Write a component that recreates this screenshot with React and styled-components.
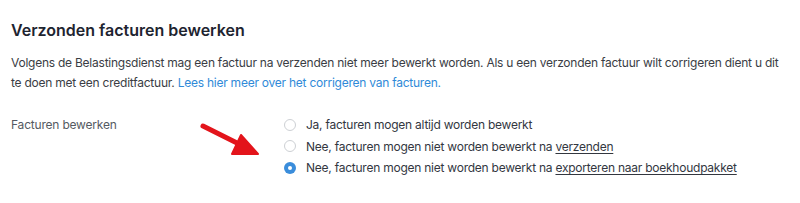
import React from "react";
import styled, { createGlobalStyle } from "styled-components";

const Global = createGlobalStyle`
  html, body { margin: 0; padding: 0; background: #fff; }
  body { font-family: Inter, "Noto Sans", sans-serif; -webkit-font-smoothing: antialiased; }
`;

const Page = styled.div`
  padding: 19px 14px 0 11px;
  width: 800px;
  box-sizing: border-box;
`;

const Title = styled.h2`
  margin: 0;
  font-size: 16px;
  line-height: 22px;
  font-weight: 600;
  color: #1e2430;
`;

const Intro = styled.p`
  margin: 12px 0 0 0;
  font-size: 12px;
  letter-spacing: -0.24px;
  line-height: 20px;
  color: #3a3d44;
`;

const Link = styled.a`
  color: #2f8ad8;
  text-decoration: none;
`;

const FieldRow = styled.div`
  display: grid;
  grid-template-columns: 273px 1fr;
  margin-top: 21px;
`;

const Label = styled.div`
  font-size: 12px;
  letter-spacing: -0.2px;
  line-height: 21px;
  color: #555a62;
`;

const Options = styled.div`
  position: relative;
  display: flex;
  flex-direction: column;
`;

const Option = styled.label`
  display: flex;
  align-items: center;
  gap: 10px;
  font-size: 12px;
  letter-spacing: -0.24px;
  line-height: 21.5px;
  color: #33373f;
`;

const Radio = styled.span`
  width: 12px;
  height: 12px;
  border-radius: 50%;
  box-sizing: border-box;
  flex: none;
  border: ${(p) => (p.$checked ? "none" : "1px solid #cdd0d4")};
  background: ${(p) => (p.$checked ? "#3a8ddb" : "#fff")};
  display: flex;
  align-items: center;
  justify-content: center;
  &::after {
    content: "";
    display: ${(p) => (p.$checked ? "block" : "none")};
    width: 4px;
    height: 4px;
    border-radius: 50%;
    background: #fff;
  }
`;

const Underlined = styled.span`
  text-decoration: underline;
  text-underline-offset: 2px;
  text-decoration-thickness: 1px;
`;

const Arrow = styled.svg`
  position: absolute;
  left: -90px;
  top: 7px;
  width: 70px;
  height: 52px;
  overflow: visible;
`;

export default function App() {
  return (
    <Page>
      <Global />
      <Title>Verzonden facturen bewerken</Title>
      <Intro>
        Volgens de Belastingsdienst mag een factuur na verzenden niet meer bewerkt worden. Als u een verzonden factuur wilt corrigeren dient u dit te doen met een creditfactuur.{" "}
        <Link href="#">Lees hier meer over het corrigeren van facturen.</Link>
      </Intro>
      <FieldRow>
        <Label>Facturen bewerken</Label>
        <Options>
          <Arrow viewBox="0 0 70 52">
            <path d="M9 5 L49 25" stroke="#e3141b" strokeWidth="5" strokeLinecap="round" fill="none" />
            <path d="M47 14 L64 33 L38 33 Z" fill="#e3141b" stroke="#e3141b" strokeWidth="2" strokeLinejoin="round" />
          </Arrow>
          <Option>
            <Radio />
            <span>Ja, facturen mogen altijd worden bewerkt</span>
          </Option>
          <Option>
            <Radio />
            <span>
              Nee, facturen mogen niet worden bewerkt na <Underlined>verzenden</Underlined>
            </span>
          </Option>
          <Option>
            <Radio $checked />
            <span>
              Nee, facturen mogen niet worden bewerkt na <Underlined>exporteren naar boekhoudpakket</Underlined>
            </span>
          </Option>
        </Options>
      </FieldRow>
    </Page>
  );
}
